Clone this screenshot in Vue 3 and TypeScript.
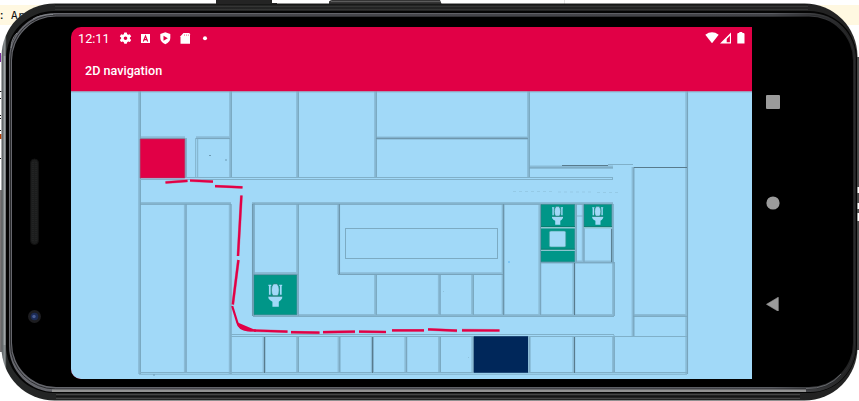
<script setup lang="ts">
type Seg = [number, number, number, number]

// Wide walls: soft band with a darker edge
const walls: Seg[] = [
  [139.5, 91, 139.5, 374], [230.5, 91, 230.5, 178], [297.5, 91, 297.5, 178],
  [375.5, 91, 375.5, 178], [528.5, 91, 528.5, 178], [686.7, 91, 686.7, 374],
  [185.3, 138, 185.3, 178], [185.3, 204, 185.3, 373], [230.2, 204, 230.2, 374],
  [253.3, 203, 253.3, 316], [297.5, 204, 297.5, 316], [297.5, 336, 297.5, 373],
  [338.7, 204, 338.7, 274], [339, 336, 339, 373], [503, 204, 503, 315],
  [539.8, 204, 539.8, 315], [573.8, 262, 573.8, 315], [573.8, 336, 573.8, 373],
  [613.4, 262, 613.4, 316], [613.4, 336, 613.4, 373], [633, 167, 633, 336],
  [375.5, 275, 375.5, 315], [439.3, 275, 439.3, 315], [439.5, 336, 439.5, 373],
  [472.5, 275, 472.5, 315], [472.7, 336, 472.7, 373], [405.8, 336, 405.8, 373],
  [372.3, 336, 372.3, 373], [529, 336, 529, 373], [264, 336, 264, 373],
  [575.5, 204, 575.5, 262], [583.2, 204, 583.2, 262], [612.3, 204, 612.3, 262],
  [140, 137.7, 185, 137.7], [196, 137.7, 230, 137.7], [376, 137.9, 528, 137.9],
  [140, 203.3, 231, 203.3], [252, 203.3, 613, 203.3], [253, 273.5, 298, 273.5],
  [338, 273.6, 503, 273.6], [253, 315.4, 614, 315.4], [633, 315.4, 687, 315.4],
  [540, 261.9, 614, 261.9], [529, 167, 613, 167],
]
// Double outlines with open space between
const thin: Seg[] = [
  [140, 177.5, 613, 177.5], [140, 179.5, 613, 179.5], [612.5, 177.5, 612.5, 179.5],
  [195.700, 138, 195.700, 178], [197.700, 139, 197.700, 178], [230, 334.5, 614, 334.5],
  [230, 336.5, 687, 336.5], [140, 372.5, 687, 372.5], [139, 374.2, 687, 374.2],
  [577, 216, 583, 216], [608, 164.5, 633, 164.5], [614, 335, 614, 340],
]
const dark: Seg[] = [
  [634, 167.5, 687, 167.5], [562, 165.5, 608, 165.5], [264.5, 337, 264.5, 373],
  [372.5, 337, 372.5, 373], [574.5, 263, 574.5, 315], [574.5, 337, 574.5, 373],
  [611.6, 229, 611.6, 262],
]
// Medium contrast, between thin and dark
const medium: Seg[] = [
  [339.3, 204, 339.3, 274], [376, 138.3, 528, 138.3], [252.7, 204, 252.7, 316],
  [503.4, 204, 503.4, 315],
]
const route: Seg[] = [
  [165.5, 182.5, 187.5, 180.8], [190, 180.5, 213, 181.6], [215, 186.1, 242.5, 187.4],
  [241.4, 195.5, 238, 256], [238.4, 260, 232.8, 304.5], [254, 330.5, 287.5, 331.6],
  [291, 332.2, 319.5, 332.7], [323, 332.2, 355, 331.7], [359, 331.6, 386, 332],
  [392, 330.4, 424, 330.4], [428, 329.4, 457, 330.7], [462, 330.3, 499.5, 330.5],
]
const toilets = [
  { x: 275.3, y: 295, s: 1.25 },
  { x: 557.5, y: 215.5, s: 1 },
  { x: 597.7, y: 215.5, s: 1 },
]
const path = (list: Seg[]): string => list.map(([a, b, c, d]) => `M${a} ${b}L${c} ${d}`).join('')
// The dark edge sits on the right or lower side of each wall
const edges = walls.map(([a, b, c, d]): Seg => (a === c ? [a + 0.8, b, c + 0.8, d] : [a, b + 0.9, c, d + 0.9]))
</script>

<template>
  <main class="desk">
    <svg class="backdrop" viewBox="0 0 859 401" aria-hidden="true">
      <defs>
        <linearGradient id="side" x1="0" x2="1" y1="0" y2="0">
          <stop offset="0" stop-color="#555a5c" />
          <stop offset=".004" stop-color="#8c9294" />
          <stop offset=".006" stop-color="#252727" />
          <stop offset=".05" stop-color="#242525" />
          <stop offset=".99" stop-color="#222" />
          <stop offset="1" stop-color="#3b3b3b" />
        </linearGradient>
        <linearGradient id="rim" x1="0" x2="1" y1="0" y2="0">
          <stop offset="0" stop-color="#66676d" />
          <stop offset=".9" stop-color="#5b5d63" />
          <stop offset=".99" stop-color="#222" />
          <stop offset="1" stop-color="#202020" />
        </linearGradient>
      </defs>
      <path d="M0 5H859V25H0Z" fill="#fff8e1" />
      <path d="M564.500 0V5" stroke="#e2e2e2" />
      <text class="colon" x="0" y="19">:</text>
      <text class="code" x="11" y="19">Ar</text>
      <path d="M0 53h1v9h-1z" fill="#7b2d9b" />
      <path d="M0 91.500h1.500M0 98.500h1M0 115.500h1M0 118.500h1M0 130.500h1M0 158.500h1" stroke="#111" />
      <path d="M0 134h1.500v5h-1.500z" fill="#b64208" />
      <path d="M0 190H3V352H0Z" fill="#777475" />
      <path d="M855 57H859V187H855ZM855 193H859V203H855ZM855 209H859V213H855ZM855 221H859V350H855Z" fill="#4b4b4b" />
      <path d="M216 5V0H272V3H277V5Z" fill="#242424" />
      <path d="M329 5V1.500Q330 0 332 0H440L442 5Z" fill="#353535" />
      <path d="M331 1.500H440" stroke="#5c5c5c" />
      <rect x="1.500" y="3.500" width="856" height="397" rx="53" fill="url(#side)" />
      <path d="M55 6.500H808M55 9.500H808" stroke="#343534" />
      <path d="M55 4.500H808" stroke="#171817" />
      <path d="M56 394.500H800M56 398.500H800" stroke="#454545" />
      <path d="M56 396.500H800" stroke="#151515" />
      <path d="M4.500 56V345" stroke="#a0a5a6" stroke-width="1.500" />
      <rect x="6" y="11" width="851" height="382" rx="48" fill="#040404" />
      <rect x="9" y="13" width="847" height="379" rx="46" fill="url(#rim)" />
      <rect x="10.500" y="15" width="844" height="374" rx="45" fill="none" stroke="#2a2b2e" />
      <path d="M52 389.500H806V392H52Z" fill="#929292" />
      <rect x="12" y="16.500" width="841" height="370.500" rx="44" fill="#000" />
      <path d="M33 19Q40 14.500 53 14.500M11 48Q11 39 17 33" fill="none" stroke="#83868b" stroke-width="1" />
      <path d="M806 388.500Q828 389 841 374" fill="none" stroke="#66686c" />
      <rect x="30.500" y="159" width="8" height="85.500" rx="4" fill="#1c1d1d" stroke="#111" />
      <path d="M33 162V241M36 162V241" stroke="#292a2a" stroke-dasharray="1 1" />
      <circle cx="34.500" cy="316.500" r="6.500" fill="#1d1d20" />
      <circle cx="34.500" cy="316.500" r="3.800" fill="#1c2b55" />
      <circle cx="34" cy="316.500" r="1.700" fill="#495d94" />
    </svg>

    <div class="device">
      <section class="screen">
        <div class="status">
          <span class="clock">12:11</span>
          <svg class="notes" viewBox="118 27 92 23">
            <g fill="#fff">
              <path fill-rule="evenodd" d="M124.300 32.500h2.400l.5 1.700 1 .6 1.700-.5 1.300 2.100-1.300 1.200v1.200l1.300 1.200-1.300 2.100-1.700-.5-1 .6-.5 1.600h-2.400l-.5-1.600-1-.6-1.700.5-1.300-2.100 1.300-1.200v-1.200l-1.300-1.200 1.300-2.100 1.700.5 1-.6zM127.300 38.200a1.800 1.800 0 1 0-3.600 0a1.800 1.800 0 1 0 3.600 0z" />
              <path d="M141 34h9v9h-9z" />
              <path d="M160.300 34l5-1.800 5 1.800v4q0 4-5 6.300q-5-2.300-5-6.300z" />
              <path d="M183.500 33h5q1.500 0 1.500 1.200v9.600h-9.500v-7.500z" />
              <circle cx="205" cy="38.300" r="2" />
            </g>
            <path d="M143.300 41.500l2.200-5.500 2.200 5.500M144.200 39.700h2.700" fill="none" stroke="#e10046" stroke-width="1.200" />
            <path d="M163.500 35.700v5l4.300-2.500z" fill="#e10046" />
            <path d="M184.500 34.300v1.700M186.500 34.300v1.700M188.400 34.300v1.700" stroke="#ef7a9e" stroke-width=".7" />
          </svg>
          <svg class="signals" viewBox="704 27 44 23">
            <path d="M705.300 34.700Q712 30 718.700 34.700L712 43.300Z" fill="#fff" />
            <path fill-rule="evenodd" d="M731 32.500V43.500H720ZM729.900 35.800L726.700 39V42.300H729.900Z" fill="#fff" />
            <path d="M737.300 34q0-1 1-1h1v-1h3v1h1q1.200 0 1.200 1v9.600h-7.200z" fill="#fff" />
          </svg>
        </div>
        <header class="appbar">2D navigation</header>
        <svg class="map" viewBox="71 91 681 288">
          <path :d="path(walls)" class="wall" />
          <path :d="path(edges)" class="edge" />
          <path :d="path(thin)" class="thin" />
          <path :d="path(medium)" class="medium" />
          <path :d="path(dark)" class="dark" />
          <path d="M140.200 139H184.800V178H140.200Z" fill="#e10046" stroke="#a83a63" stroke-width=".6" />
          <path d="M473.800 336.200H528V372.800H473.800Z" fill="#00275a" />
          <path d="M254 275H296.800V314.700H254ZM541 204.500H574.700V261.800H541ZM584 204.500H611.700V226.800H584Z" fill="#009688" stroke="#2d7f80" stroke-width=".5" />
          <path d="M541 227.700H575M541 250.200H575M584 227.700H612" stroke="#8cc5cf" stroke-width="1.500" />
          <path d="M541 226.500H575M541 249.200H575M584 226.500H612" stroke="#087565" stroke-width=".7" />
          <rect x="345.500" y="228.500" width="152" height="30" fill="none" stroke="#7cabc3" />
          <path d="M513 191.500H554M558 192H592M597 192.500H620" stroke="#8dbfda" stroke-width=".6" stroke-dasharray="3 3" />
          <path d="M209 155.500h2M225 160h2M153 375h2" stroke="#6d9bb4" />
          <path d="M468 357.500h1M443 291.500h1" stroke="#8fc2dd" />
          <path d="M508 262h2" stroke="#58b2f2" />
          <rect x="549.300" y="231" width="16.500" height="16" rx="1.500" fill="#a1d9f8" stroke="#39998e" stroke-width=".6" />
          <g v-for="t in toilets" :key="t.x" :transform="`translate(${t.x} ${t.y}) scale(${t.s})`">
            <path d="M-5.500-8.300h2.300v1h-.5v7h-1.400v-7h-.4zM5.500-8.300h-2.300v1h.5v7h1.400v-7h.4z" fill="#a1d9f8" />
            <path d="M-1.500-8.900h3Q3.100-7 3.100-4Q3.100-.8 1.900.6H-1.900Q-3.100-.8-3.100-4Q-3.100-7-1.500-8.900" fill="#a1d9f8" stroke="#327e78" stroke-width=".5" />
            <path d="M-5.500 1.200H5.500V2.600Q4.300 4.800 2.800 5.300V9.300H-2.300V5.300Q-4.300 4.800-5.500 2.600Z" fill="#a1d9f8" />
            <path d="M-5.500 .9H5.500" stroke="#327e78" stroke-width=".6" />
          </g>
          <path :d="path(route)" class="route-glow" />
          <path :d="path(route)" class="route" />
          <path d="M232.200 306L237.300 322.500Q239 329.500 248 330.400L256 330.700" class="route" />
          <path d="M236.500 322L256 330.200Q250 332.500 243 329.800Q238 328 236.500 322Z" fill="#e10046" />
          <path d="M71 91.500H752" stroke="#a87b9b" stroke-opacity=".7" />
          <path d="M71 92.500H752" stroke="#7eafc9" stroke-opacity=".35" />
        </svg>
      </section>
      <nav class="keys">
        <svg viewBox="0 0 14 14"><rect width="14" height="14" rx="1" fill="#9b9b9b" /></svg>
        <svg viewBox="0 0 14 14"><circle cx="7" cy="7" r="6.600" fill="#9b9b9b" /></svg>
        <svg viewBox="0 0 14 14"><path d="M.5 7.300L12.300.2V14.300Z" fill="#9b9b9b" stroke="#9b9b9b" stroke-width=".6" stroke-linejoin="round" /></svg>
      </nav>
    </div>
  </main>
</template>

<style>
body {
  overflow: hidden;
  background: #fff;
}
</style>

<style scoped>
.desk {
  position: relative;
  width: 859px;
  height: 401px;
  overflow: hidden;
  font-family: Roboto, "Liberation Sans", sans-serif;
}
.backdrop {
  position: absolute;
  inset: 0;
  width: 859px;
  height: 401px;
}
.code {
  font: 11px "DejaVu Sans Mono", monospace;
  fill: #111;
}
.colon {
  font: bold 10px "Liberation Sans", sans-serif;
  fill: #111;
}
.device {
  position: relative;
  display: flex;
  height: 352px;
  padding: 27px 0 22px 71px;
}
.screen {
  display: flex;
  flex-direction: column;
  width: 681px;
  overflow: hidden;
  border-radius: 10px 0 0 10px;
  background: #e10046;
  color: #fff;
}
.status {
  display: flex;
  height: 23px;
  padding: 0 4px 0 7px;
  align-items: center;
}
.clock {
  width: 40px;
  font-size: 12.7px;
  line-height: 23px;
}
.notes {
  width: 92px;
  height: 23px;
}
.signals {
  width: 44px;
  height: 23px;
  margin-left: auto;
}
.appbar {
  height: 41px;
  padding-left: 14px;
  font-size: 12.6px;
  font-weight: 500;
  line-height: 42px;
}
.map {
  display: block;
  width: 681px;
  height: 288px;
  background: #a1d9f8;
}
.wall,
.edge,
.thin,
.medium,
.dark,
.route,
.route-glow {
  fill: none;
}
.wall {
  stroke: #8abbd6;
  stroke-width: 2.800;
}
.edge {
  stroke: #76a2b9;
  stroke-width: 0.900;
}
.thin {
  stroke: #80b0c9;
  stroke-width: 1;
}
.medium {
  stroke: #6b93a8;
  stroke-width: 1;
}
.dark {
  stroke: #587b8d;
  stroke-width: 1;
}
.route {
  stroke: #e10046;
  stroke-width: 2.200;
}
.route-glow {
  stroke: #c77da4;
  stroke-width: 2.900;
}
.keys {
  display: flex;
  flex-direction: column;
  justify-content: space-between;
  height: 216px;
  padding: 68px 0 0 14px;
}
.keys svg {
  width: 14px;
  height: 14px;
}
</style>
